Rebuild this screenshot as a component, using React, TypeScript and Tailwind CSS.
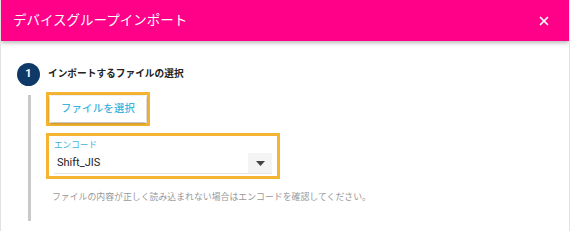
import { X } from "lucide-react"

const font = { fontFamily: '"Roboto", "Noto Sans CJK JP", sans-serif' }

export default function App() {
  return (
    <div
      className="relative h-[231px] w-[570px] overflow-hidden border-x border-[#e2e2e2] bg-white"
      style={font}
    >
      {/* Header */}
      <div className="relative z-10 flex h-[41px] items-center justify-between bg-[#ff0088] pl-[12px] pr-[18px] shadow-[0_2px_4px_rgba(0,0,0,0.28)]">
        <span className="text-[13.5px] leading-none text-white">デバイスグループインポート</span>
        <X className="h-[14px] w-[14px] text-white" strokeWidth={3} />
      </div>

      {/* Body */}
      <div className="pl-[16px] pt-[22px]">
        <div className="flex items-center">
          <div className="flex h-[23px] w-[23px] items-center justify-center rounded-full bg-[#0f3a68] text-[11px] font-bold text-white">
            1
          </div>
          <span className="ml-[8px] text-[9.7px] font-bold text-[#222]">インポートするファイルの選択</span>
        </div>

        <div className="mt-[6px] flex">
          <div className="ml-[11px] mt-[3px] h-[126px] w-[3px] bg-[#c9c9c9]" />
          <div className="ml-[15px] flex flex-col">
            <div className="w-[104px] border-[3px] border-[#f5b431] p-px">
              <div className="flex h-[26px] items-center justify-center bg-white text-[10.3px] font-medium tracking-[0.3px] text-[#3db3e0] shadow-[0_1px_3px_rgba(0,0,0,0.35)]">
                ファイルを選択
              </div>
            </div>

            <div className="mt-[7px] w-[234px] border-[3px] border-[#f5b431] px-[5px] pt-[3px]">
              <div className="text-[8.6px] leading-[12px] text-[#3db3e0]">エンコード</div>
              <div className="mt-[2px] flex h-[21px] items-center justify-between border-b border-[#e4e4e4]">
                <span className="pl-[3px] text-[11px] text-[#222]">Shift_JIS</span>
                <div className="flex h-[20px] w-[24px] items-center justify-center bg-[#f4f4f4]">
                  <svg width="9" height="5" viewBox="0 0 9 5">
                    <path d="M0 0 H9 L4.5 5 Z" fill="#444" />
                  </svg>
                </div>
              </div>
              <div className="h-[2px]" />
            </div>

            <div className="ml-[6px] mt-[12px] text-[8.9px] text-[#999]">
              ファイルの内容が正しく読み込まれない場合はエンコードを確認してください。
            </div>
          </div>
        </div>
      </div>
    </div>
  )
}
